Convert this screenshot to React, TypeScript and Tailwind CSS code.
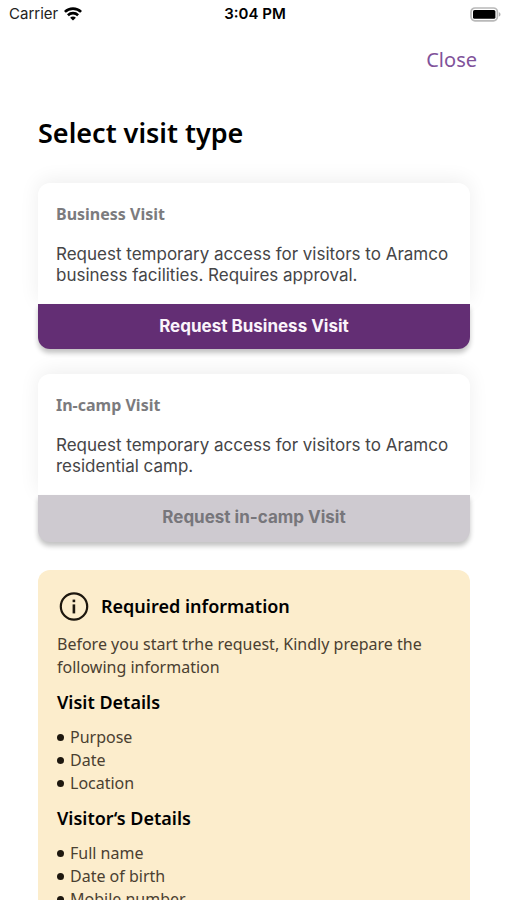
import React from "react";

type Visit = {
  title: string;
  description: string;
  action: string;
  disabled?: boolean;
};

const visits: Visit[] = [
  {
    title: "Business Visit",
    description:
      "Request temporary access for visitors to Aramco business facilities. Requires approval.",
    action: "Request Business Visit",
  },
  {
    title: "In-camp Visit",
    description:
      "Request temporary access for visitors to Aramco residential camp.",
    action: "Request in-camp Visit",
    disabled: true,
  },
];

const sections = [
  { title: "Visit Details", items: ["Purpose", "Date", "Location"] },
  {
    title: "Visitor‘s Details",
    items: ["Full name", "Date of birth", "Mobile number"],
  },
];

function WifiIcon() {
  return (
    <svg width="18" height="14" viewBox="0 0 18 14" aria-hidden="true">
      <g fill="none" stroke="#000" strokeWidth="2.6">
        <path d="M0.9 4.9 C5.4 0.5 12.6 0.5 17.1 4.9" />
        <path d="M3.9 8.2 C6.8 5.4 11.2 5.4 14.1 8.2" />
      </g>
      <path d="M9 13.6 L6.1 10.7 C7.7 9.2 10.3 9.2 11.9 10.7 Z" fill="#000" />
    </svg>
  );
}

function BatteryIcon() {
  return (
    <svg width="31" height="15" viewBox="0 0 31 15" aria-hidden="true">
      <rect x="1" y="1" width="26.4" height="12.8" rx="4" fill="#fff" stroke="#b9b9b9" strokeWidth="1.7" />
      <rect x="3" y="3" width="22.4" height="8.8" rx="1.6" fill="#000" />
      <path d="M28.9 5.2 C31 5.7 31 9.1 28.9 9.6 Z" fill="#b0b0b0" />
    </svg>
  );
}

function InfoIcon() {
  return (
    <svg width="30" height="30" viewBox="0 0 30 30" aria-hidden="true">
      <circle cx="15" cy="15.5" r="13.2" fill="none" stroke="#1d170e" strokeWidth="2.2" />
      <rect x="13.6" y="8.6" width="2.6" height="2.6" fill="#1d170e" />
      <rect x="13.6" y="13.4" width="2.6" height="9" fill="#1d170e" />
    </svg>
  );
}

function VisitCard({ title, description, action, disabled }: Visit) {
  return (
    <section>
      <div className="flex flex-col gap-[19px] rounded-t-xl bg-white px-[18px] pt-5 pb-[18px] shadow-[0_-3px_20px_rgba(0,0,0,0.07)]">
        <h2 className="font-['Noto_Sans',sans-serif] text-base leading-[22px] font-bold text-[#7b7b7e]">
          {title}
        </h2>
        <p className="text-[17px] leading-[21px] text-[#454547]">{description}</p>
      </div>
      <button
        type="button"
        disabled={disabled}
        className="relative block w-full rounded-b-xl bg-[#632e74] pt-3 pb-[13px] text-[17px] leading-5 font-bold text-[#faf4fb] shadow-[0_4px_5px_rgba(0,0,0,0.24)] disabled:bg-[#cecad0] disabled:pb-[15px] disabled:text-[#77767b]"
      >
        {action}
      </button>
    </section>
  );
}

export default function App() {
  return (
    <div className="flex h-screen flex-col overflow-hidden bg-white font-['Inter',sans-serif] text-black">
      <header className="grid shrink-0 grid-cols-3 items-center pt-1 pr-1.5 pl-[9px]">
        <div className="flex items-center gap-1.5 text-[15px] leading-5 text-[#222]">
          <span>Carrier</span>
          <WifiIcon />
        </div>
        <time className="text-center text-[15px] leading-5 font-semibold">3:04 PM</time>
        <div className="flex justify-end">
          <BatteryIcon />
        </div>
      </header>

      <main className="flex-1 overflow-y-auto pb-8 [scrollbar-width:none]">
        <nav className="flex justify-end px-[30px] pt-[22px]">
          <button
            type="button"
            className="font-['Noto_Sans',sans-serif] text-xl leading-7 text-[#80529a]"
          >
            Close
          </button>
        </nav>
        <div className="flex flex-col pr-[37px] pl-[38px]">
          <h1 className="pt-[41px] font-['Noto_Sans',sans-serif] text-[27px] leading-9 font-semibold">
            Select visit type
          </h1>
          <div className="flex flex-col gap-[25px] pt-8">
            {visits.map((visit) => (
              <VisitCard key={visit.title} {...visit} />
            ))}
          </div>
          <section className="mt-7 rounded-xl bg-[#fcedcc] px-[19px] pt-[21px] pb-6 font-['Noto_Sans',sans-serif] text-[#4a4031]">
            <div className="flex items-center gap-3 pl-0.5">
              <InfoIcon />
              <h2 className="text-lg leading-6 font-semibold text-black">Required information</h2>
            </div>
            <p className="pt-3 text-base leading-[23px]">
              Before you start trhe request, Kindly prepare the following information
            </p>
            {sections.map((section) => (
              <div key={section.title}>
                <h3 className="pt-[11px] text-lg leading-6 font-semibold text-black">{section.title}</h3>
                <ul className="pt-3 text-base leading-[23px]">
                  {section.items.map((item) => (
                    <li key={item} className="flex items-center gap-1.5">
                      <span className="size-[7px] rounded-full bg-[#1d170e]" />
                      {item}
                    </li>
                  ))}
                </ul>
              </div>
            ))}
          </section>
        </div>
      </main>
    </div>
  );
}
